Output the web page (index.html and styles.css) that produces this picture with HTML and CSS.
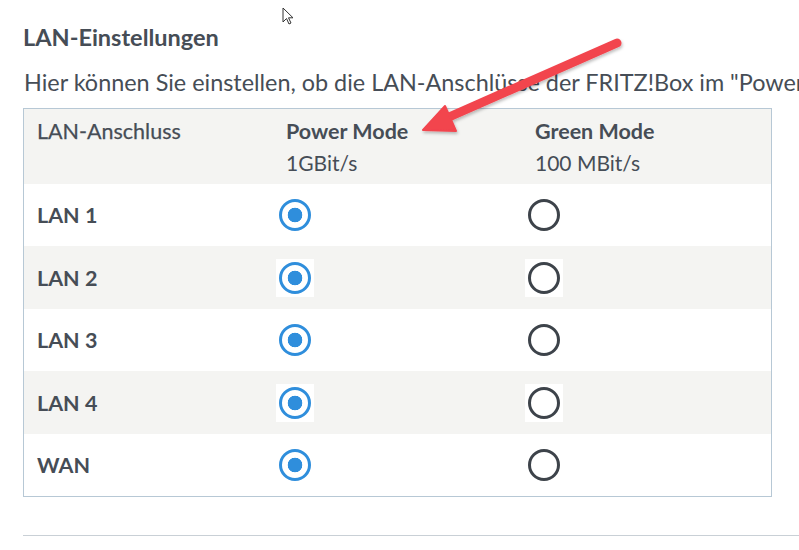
FILE: index.html
```html
<!DOCTYPE html>
<html lang="de">
<head>
<meta charset="utf-8">
<title>LAN-Einstellungen</title>
<link rel="stylesheet" href="styles.css">
</head>
<body>
<div class="page">
  <h2 class="title">LAN-Einstellungen</h2>
  <p class="intro">Hier können Sie einstellen, ob die LAN-Anschlüsse der FRITZ!Box im "Power Mode" oder im "Green Mode" betrieben werden.</p>
  <div class="table">
    <div class="row head">
      <div class="cell"><span class="colname">LAN-Anschluss</span></div>
      <div class="cell"><b>Power Mode</b><span>1GBit/s</span></div>
      <div class="cell"><b>Green Mode</b><span>100 MBit/s</span></div>
    </div>
    <div class="row">
      <div class="cell name">LAN 1</div>
      <div class="cell"><span class="radio on"></span></div>
      <div class="cell"><span class="radio"></span></div>
    </div>
    <div class="row alt">
      <div class="cell name">LAN 2</div>
      <div class="cell"><span class="radio on"></span></div>
      <div class="cell"><span class="radio"></span></div>
    </div>
    <div class="row">
      <div class="cell name">LAN 3</div>
      <div class="cell"><span class="radio on"></span></div>
      <div class="cell"><span class="radio"></span></div>
    </div>
    <div class="row alt">
      <div class="cell name">LAN 4</div>
      <div class="cell"><span class="radio on"></span></div>
      <div class="cell"><span class="radio"></span></div>
    </div>
    <div class="row">
      <div class="cell name">WAN</div>
      <div class="cell"><span class="radio on"></span></div>
      <div class="cell"><span class="radio"></span></div>
    </div>
  </div>
  <hr class="sep">
</div>

<svg class="arrow" width="240" height="120" viewBox="400 30 240 120" aria-hidden="true">
  <defs>
    <filter id="sh" x="-10%" y="-10%" width="130%" height="140%">
      <feDropShadow dx="1" dy="2" stdDeviation="1.5" flood-color="#000" flood-opacity="0.25"/>
    </filter>
  </defs>
  <g filter="url(#sh)" fill="#f2444e" stroke="#f2444e" stroke-linejoin="round">
    <line x1="617" y1="43" x2="440" y2="121" stroke-width="9" stroke-linecap="round"/>
    <polygon points="423,130 445,106 456,131" stroke-width="2"/>
  </g>
</svg>

<svg class="cursor" width="14" height="20" viewBox="0 0 14 20" aria-hidden="true">
  <path d="M1 1 L1 15 L4.5 11.5 L7 17 L9 16 L6.5 10.8 L11 10.8 Z" fill="#fff" stroke="#333" stroke-width="1" stroke-linejoin="round"/>
</svg>
</body>
</html>
```

FILE: styles.css
```css
html, body {
  margin: 0;
  padding: 0;
  background: #ffffff;
}
body {
  font-family: "Lato", "Open Sans", sans-serif;
  color: #464d56;
  width: 799px;
  height: 550px;
  overflow: hidden;
  position: relative;
}
.page {
  padding: 23px 0 0 23px;
}
.title {
  margin: 0;
  font-size: 23.5px;
  font-weight: 700;
  line-height: 28px;
  color: #464d56;
}
.intro {
  margin: 17px 0 0 1px;
  font-size: 23.4px;
  line-height: 28px;
  white-space: nowrap;
  overflow: hidden;
  color: #464d56;
}
.table {
  margin-top: 12px;
  width: 747px;
  border: 1px solid #b7c8d5;
}
.row {
  display: grid;
  grid-template-columns: 1fr 1fr 1fr;
  height: 62px;
  background: #ffffff;
}
.row.alt {
  height: 63px;
  background: #f4f4f2;
}
.row.head {
  height: 75px;
  background: #f4f4f2;
}
.cell {
  padding-left: 13px;
  display: flex;
  align-items: center;
  font-size: 21.5px;
}
.head .cell {
  flex-direction: column;
  align-items: flex-start;
  justify-content: flex-start;
  padding-top: 7px;
  font-size: 21px;
  line-height: 31px;
}
.head .cell b {
  font-weight: 700;
  font-size: 21.5px;
}
.colname {
  font-size: 21.5px;
  -webkit-text-stroke: 0.25px #464d56;
}
.cell.name {
  font-weight: 700;
}
.radio {
  box-sizing: border-box;
  width: 38px;
  height: 38px;
  margin-left: -10px;
  background: #ffffff;
  display: flex;
  align-items: center;
  justify-content: center;
}
.row:not(.alt) .radio {
  background: transparent;
}
.radio::before {
  content: "";
  box-sizing: border-box;
  width: 32px;
  height: 32px;
  border-radius: 50%;
  border: 3px solid #3d434a;
  background: #fff;
}
.radio.on::before {
  border-color: #2f8edc;
  background: radial-gradient(circle, #2f8edc 0 7px, #ffffff 7.6px);
}
.sep {
  margin: 38px 0 0 0;
  border: 0;
  border-top: 1px solid #c9d0d6;
}
.arrow {
  position: absolute;
  left: 400px;
  top: 30px;
}
.cursor {
  position: absolute;
  left: 282px;
  top: 7px;
}
```
